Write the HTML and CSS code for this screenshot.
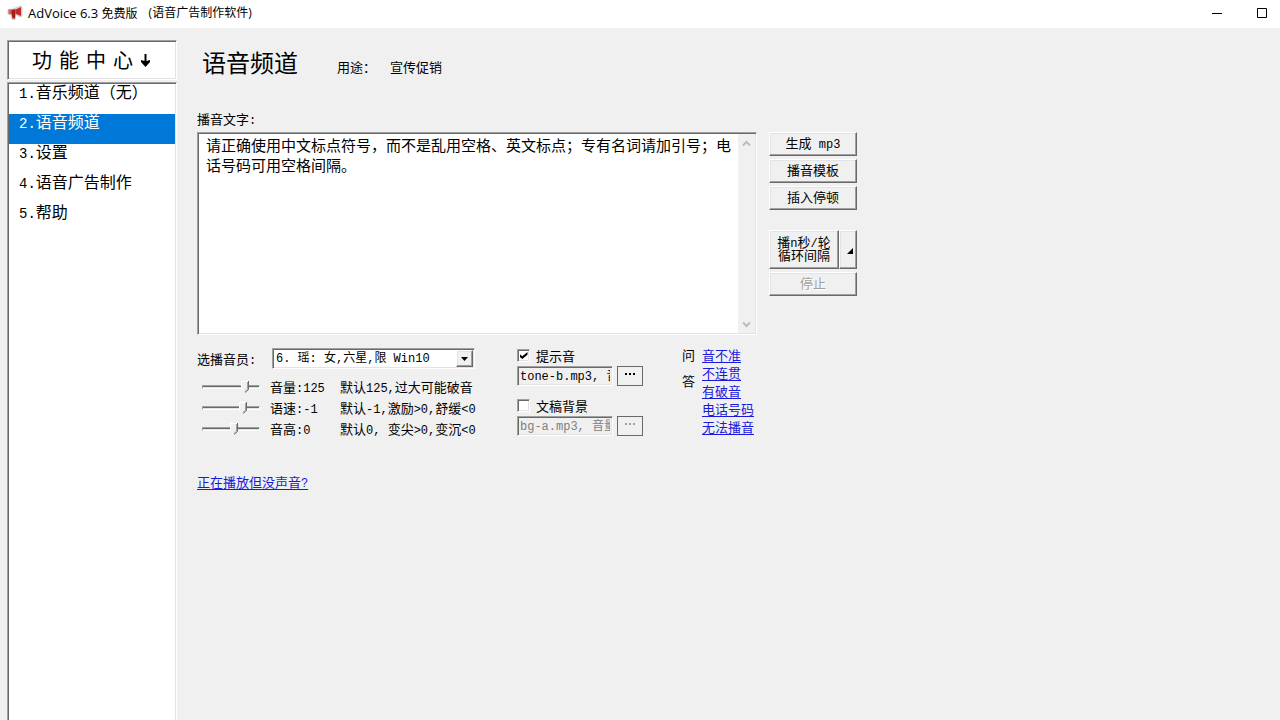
FILE: index.html
```
<!DOCTYPE html>
<html lang="zh-CN">
<head>
<meta charset="utf-8">
<title>AdVoice 6.3 免费版</title>
<link rel="stylesheet" href="styles.css">
</head>
<body>
<header class="titlebar">
  <svg class="app-icon" width="16" height="16" viewBox="0 0 16 16" aria-hidden="true">
    <path d="M1 4.5 L6 4 L13.5 1 L15 2 L15 11 L13.5 12 L8.5 9.5 L8 14.5 L5 14.5 L4 10 L1 9Z" fill="#d6d0d0" stroke="#cfcfcf"/>
    <path d="M1.5 4.5 H4.5 V9 H1.5Z" fill="#d9605a"/>
    <path d="M4.4 4.8 L8.8 4.2 L8 13.5 H5.6 L4.4 9Z" fill="#a81c1c"/>
    <path d="M8.8 4.6 L14 2 V11 L8.6 8.8Z" fill="#c42a2a"/>
  </svg>
  <span><span class="app-name">AdVoice 6.3 </span>免费版</span>
  <span class="window-subtitle">(语音广告制作软件)</span>
  <div class="window-buttons">
    <button type="button" aria-label="最小化"><svg width="11" height="11" viewBox="0 0 11 11"><path d="M0 5.5H10" stroke="#000"/></svg></button>
    <button type="button" aria-label="最大化"><svg width="11" height="11" viewBox="0 0 11 11"><path d="M.5 .5H9.5V9.5H.5Z" fill="none" stroke="#000"/></svg></button>
  </div>
</header>
<div class="workspace">
  <aside class="sidebar">
    <div class="sidebar-head sunken">
      <span>功</span><span>能</span><span>中</span><span>心</span>
      <svg width="12" height="16" viewBox="0 0 12 16" aria-hidden="true"><path d="M4.5 2H6.5V9L10 8V10L5.5 15L1 10V8L4.5 9Z"/></svg>
    </div>
    <ul class="nav sunken">
      <li><span class="num">1.</span>音乐频道（无）</li>
      <li class="selected"><span class="num">2.</span>语音频道</li>
      <li><span class="num">3.</span>设置</li>
      <li><span class="num">4.</span>语音广告制作</li>
      <li><span class="num">5.</span>帮助</li>
    </ul>
  </aside>
  <main class="content">
    <div class="page-head">
      <h1>语音频道</h1>
      <span class="purpose">用途：</span>
      <span>宣传促销</span>
    </div>
    <label class="editor-label" for="script">播音文字<span class="latin">:</span></label>
    <div class="editor-row">
      <div class="editor sunken">
        <textarea id="script">请正确使用中文标点符号，而不是乱用空格、英文标点；专有名词请加引号；电话号码可用空格间隔。</textarea>
        <div class="scrollbar" aria-hidden="true">
          <svg width="9" height="7" viewBox="0 0 9 7"><path d="M1 5.5L4.5 2L8 5.5" fill="none" stroke="#bdbdbd" stroke-width="2"/></svg>
          <svg width="9" height="7" viewBox="0 0 9 7"><path d="M1 1.5L4.5 5L8 1.5" fill="none" stroke="#bdbdbd" stroke-width="2"/></svg>
        </div>
      </div>
      <div class="actions">
        <button type="button" class="raised">生成<span class="latin"> mp3</span></button>
        <button type="button" class="raised">播音模板</button>
        <button type="button" class="raised">插入停顿</button>
        <div class="loop">
          <button type="button" class="raised loop-main">播<span class="latin">n</span>秒<span class="latin">/</span>轮<br>循环间隔</button>
          <button type="button" class="raised loop-more" aria-label="更多"><svg width="6" height="6" viewBox="0 0 6 6"><path d="M6 0V6H0Z"/></svg></button>
        </div>
        <button type="button" class="raised stop" disabled>停止</button>
      </div>
    </div>
    <div class="settings">
      <section class="voice">
        <div class="voice-pick">
          <label for="voice">选播音员<span class="latin">:</span></label>
          <div class="select-box sunken">
            <select id="voice"><option>6. 瑶: 女,六星,限 Win10</option></select>
            <span class="select-arrow raised" aria-hidden="true"><svg width="7" height="4" viewBox="0 0 7 4"><path d="M0 0H7L3.5 4Z"/></svg></span>
          </div>
        </div>
        <div class="slider-row">
          <input id="vol" type="range" min="0" max="50" value="40">
          <label for="vol">音量<span class="latin">:125</span></label>
          <span>默认<span class="latin">125,</span>过大可能破音</span>
        </div>
        <div class="slider-row">
          <input id="speed" type="range" min="0" max="50" value="38">
          <label for="speed">语速<span class="latin">:-1</span></label>
          <span>默认<span class="latin">-1,</span>激励<span class="latin">&gt;0,</span>舒缓<span class="latin">&lt;0</span></span>
        </div>
        <div class="slider-row">
          <input id="pitch" type="range" min="0" max="50" value="28">
          <label for="pitch">音高<span class="latin">:0</span></label>
          <span>默认<span class="latin">0, </span>变尖<span class="latin">&gt;0,</span>变沉<span class="latin">&lt;0</span></span>
        </div>
      </section>
      <section class="sounds">
        <div class="sound">
          <label class="check"><input type="checkbox" checked>提示音</label>
          <div class="file-row">
            <input class="sunken" type="text" value="tone-b.mp3, 音量" aria-label="提示音文件">
            <button type="button" class="browse" aria-label="选择提示音"><svg width="11" height="2" viewBox="0 0 11 2"><path d="M0 0H2V2H0ZM4 0H6V2H4ZM8 0H10V2H8Z"/></svg></button>
          </div>
        </div>
        <div class="sound">
          <label class="check"><input type="checkbox">文稿背景</label>
          <div class="file-row">
            <input class="sunken" type="text" value="bg-a.mp3, 音量" aria-label="背景音文件" disabled>
            <button type="button" class="browse" aria-label="选择背景音" disabled><svg width="11" height="2" viewBox="0 0 11 2"><path d="M0 0H2V2H0ZM4 0H6V2H4ZM8 0H10V2H8Z"/></svg></button>
          </div>
        </div>
      </section>
      <section class="faq">
        <div class="faq-title"><span>问</span><span>答</span></div>
        <nav class="faq-links">
          <a href="#">音不准</a>
          <a href="#">不连贯</a>
          <a href="#">有破音</a>
          <a href="#">电话号码</a>
          <a href="#">无法播音</a>
        </nav>
      </section>
    </div>
    <a class="no-sound" href="#">正在播放但没声音<span class="latin">?</span></a>
  </main>
</div>
</body>
</html>
```
FILE: styles.css
```
* {
  box-sizing: border-box;
}

body {
  margin: 0;
  height: 100vh;
  display: flex;
  flex-direction: column;
  overflow: hidden;
  background: #f0f0f0;
  color: #000;
  font: 13px/18px "Noto Sans CJK SC", sans-serif;
}

button,
input,
select,
textarea {
  font: inherit;
  color: inherit;
  margin: 0;
}

a {
  color: #1a1adf;
  text-underline-offset: 2px;
}

.latin {
  font-family: "Liberation Mono", monospace;
  font-size: 12px;
  line-height: 0;
  white-space: pre;
}

.sunken {
  border: 1px solid;
  border-color: #a0a0a0 #fff #fff #a0a0a0;
  box-shadow: inset 1px 1px #696969, inset -1px -1px #e3e3e3;
}

.raised {
  border: 1px solid;
  border-color: #fff #696969 #696969 #fff;
  box-shadow: inset -1px -1px #a0a0a0, inset 1px 1px #e3e3e3;
  background: #f0f0f0;
}

/* Title bar */
.titlebar {
  flex: none;
  display: flex;
  align-items: center;
  height: 28px;
  padding: 0 12px 2px 7px;
  background: #fff;
  font-family: "Open Sans", "Noto Sans CJK SC", sans-serif;
  font-size: 12px;
}

.app-icon {
  margin-right: 5px;
}

.app-name {
  font-size: 13px;
}

.window-subtitle {
  margin-left: 11px;
}

.window-buttons {
  display: flex;
  gap: 34px;
  margin-left: auto;
}

.window-buttons button {
  display: flex;
  padding: 0;
  border: 0;
  background: none;
}

/* Sidebar */
.workspace {
  flex: 1;
  display: flex;
  min-height: 0;
}

.sidebar {
  flex: none;
  display: flex;
  flex-direction: column;
  gap: 2px;
  width: 170px;
  margin: 12px 0 0 7px;
}

.sidebar-head {
  display: flex;
  align-items: center;
  justify-content: center;
  gap: 7px;
  height: 40px;
  background: #fff;
  font-size: 20px;
}

.nav {
  flex: 1;
  margin: 0 0 -4px;
  padding: 1px;
  list-style: none;
  background: #fff;
  font-size: 16px;
  line-height: 14px;
}

.nav li {
  height: 30px;
  padding-left: 10px;
}

.nav .selected {
  background: #0078d7;
  color: #fff;
}

.num {
  font-family: "Liberation Mono", monospace;
  font-size: 14px;
  line-height: 0;
}

/* Main pane */
.content {
  flex: 1;
  min-width: 0;
  padding: 16px 20px 0;
}

.page-head {
  display: flex;
  align-items: center;
  height: 38px;
  padding-left: 5px;
}

.page-head span {
  padding-top: 8px;
}

h1 {
  margin: 0 39px 2px 0;
  font-size: 24px;
  font-weight: 400;
}

.purpose {
  margin-right: 14px;
}

.editor-label {
  display: block;
  margin: 28px 0 4px;
}

.editor-row {
  display: flex;
  align-items: flex-start;
  gap: 12px;
}

.editor {
  display: flex;
  width: 560px;
  height: 203px;
  padding: 1px;
  background: #fff;
}

.editor textarea {
  flex: 1;
  padding: 1px 6px 0 7px;
  border: 0;
  outline: 0;
  resize: none;
  overflow: hidden;
  background: none;
  font-size: 15px;
  line-height: 20px;
}

.scrollbar {
  display: flex;
  flex-direction: column;
  align-items: center;
  justify-content: space-between;
  width: 17px;
  padding: 6px 1px 5px 0;
  background: #f0f0f0;
}

.actions {
  display: flex;
  flex-direction: column;
  gap: 3px;
  width: 88px;
}

.actions button {
  height: 24px;
  padding: 0 0 3px;
  line-height: 13px;
}

.loop {
  display: flex;
  margin-top: 17px;
}

.actions .loop-main {
  width: 70px;
  height: 39px;
}

.actions .loop-more {
  display: flex;
  flex: 1;
  align-items: center;
  justify-content: flex-end;
  height: 39px;
  padding: 2px 3px 0 0;
}

.stop:disabled {
  color: #a0a0a0;
  text-shadow: 1px 1px #fff;
}

/* Voice, sounds and questions */
.settings {
  display: flex;
  align-items: flex-start;
  margin-top: 11px;
}

.voice {
  width: 320px;
  padding-top: 2px;
}

.voice-pick {
  display: flex;
  align-items: center;
  height: 21px;
  margin-bottom: 7px;
}

.voice-pick label {
  width: 75px;
}

.select-box {
  display: flex;
  width: 203px;
  height: 21px;
  padding: 1px;
  background: #fff;
}

.select-box select {
  flex: 1;
  min-width: 0;
  padding: 0 2px;
  border: 0;
  outline: 0;
  appearance: none;
  background: none;
  font-family: "Liberation Mono", "Noto Sans CJK SC", monospace;
  font-size: 12px;
  line-height: 16px;
}

.select-arrow {
  display: flex;
  align-items: center;
  justify-content: center;
  width: 17px;
}

.slider-row {
  display: grid;
  grid-template-columns: 73px 70px auto;
  align-items: center;
  height: 21px;
  white-space: nowrap;
}

.slider-row input {
  width: 58px;
  height: 14px;
  margin: 0 0 0 5px;
  appearance: none;
  background: none;
}

.slider-row input::-webkit-slider-runnable-track {
  height: 4px;
  border: 1px solid;
  border-color: #a0a0a0 #fff #fff #a0a0a0;
  background: linear-gradient(#696969 1px, #e3e3e3 1px);
}

.slider-row input::-webkit-slider-thumb {
  width: 8px;
  height: 12px;
  margin-top: -5px;
  appearance: none;
  border: 0;
  border-radius: 0;
  background: url("data:image/svg+xml,%3Csvg xmlns='http://www.w3.org/2000/svg' width='8' height='12'%3E%3Cpath d='M0 0H8V9L5 12H3L0 9Z' fill='%23f0f0f0'/%3E%3Cpath d='M.5 9V.5H7' fill='none' stroke='%23fff'/%3E%3Cpath d='M6.5 1V8L4 10.5' fill='none' stroke='%23a0a0a0'/%3E%3Cpath d='M7.5 0V8.5L4 11.5' fill='none' stroke='%23696969'/%3E%3C/svg%3E") no-repeat;
}

.sounds {
  width: 165px;
  padding-top: 2px;
}

.sound {
  height: 50px;
}

.check {
  display: flex;
  align-items: center;
  gap: 6px;
  width: max-content;
  height: 15px;
  margin-bottom: 3px;
}

.check input {
  display: grid;
  place-content: center;
  width: 13px;
  height: 13px;
  appearance: none;
  border: 1px solid;
  border-color: #a0a0a0 #fff #fff #a0a0a0;
  box-shadow: inset 1px 1px #696969, inset -1px -1px #e3e3e3;
  background: #fff;
}

.check input:checked::before {
  content: "";
  width: 8px;
  height: 7px;
  background: #000;
  clip-path: polygon(0 29%, 35% 62%, 100% 0, 100% 38%, 35% 100%, 0 67%);
}

.file-row {
  display: flex;
  gap: 4px;
}

.file-row input {
  width: 96px;
  height: 20px;
  padding: 0 2px 2px;
  background: #f0f0f0;
  font-family: "Liberation Mono", "Noto Sans CJK SC", monospace;
  font-size: 12px;
}

.browse {
  display: flex;
  justify-content: center;
  width: 26px;
  height: 20px;
  padding: 6px 0 0;
  border: 1px solid #696969;
  background: #f0f0f0;
}

.file-row input:disabled {
  color: #808080;
}

.browse:disabled {
  fill: #a0a0a0;
}

.faq {
  display: flex;
  gap: 7px;
}

.faq-title {
  display: flex;
  flex-direction: column;
  gap: 8px;
}

.faq-links {
  display: flex;
  flex-direction: column;
}

.no-sound {
  display: inline-block;
  margin-top: 25px;
}
```
